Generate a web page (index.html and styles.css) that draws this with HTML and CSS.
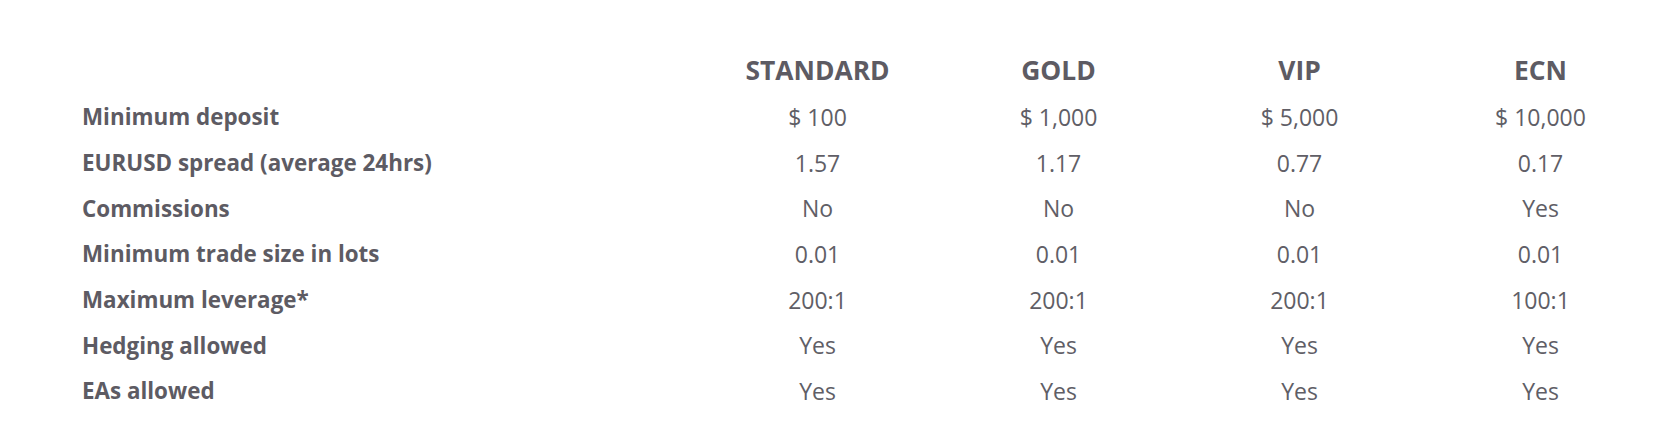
FILE: index.html
```html
<!DOCTYPE html>
<html>
<head>
<meta charset="utf-8">
<link rel="stylesheet" href="styles.css">
</head>
<body>
<div class="page">
  <div class="grid">
    <div class="row head">
      <div class="label"></div>
      <div class="cell">STANDARD</div>
      <div class="cell">GOLD</div>
      <div class="cell">VIP</div>
      <div class="cell">ECN</div>
    </div>
    <div class="row">
      <div class="label">Minimum deposit</div>
      <div class="cell">$ 100</div>
      <div class="cell">$ 1,000</div>
      <div class="cell">$ 5,000</div>
      <div class="cell">$ 10,000</div>
    </div>
    <div class="row">
      <div class="label">EURUSD spread (average 24hrs)</div>
      <div class="cell">1.57</div>
      <div class="cell">1.17</div>
      <div class="cell">0.77</div>
      <div class="cell">0.17</div>
    </div>
    <div class="row">
      <div class="label">Commissions</div>
      <div class="cell">No</div>
      <div class="cell">No</div>
      <div class="cell">No</div>
      <div class="cell">Yes</div>
    </div>
    <div class="row">
      <div class="label">Minimum trade size in lots</div>
      <div class="cell">0.01</div>
      <div class="cell">0.01</div>
      <div class="cell">0.01</div>
      <div class="cell">0.01</div>
    </div>
    <div class="row">
      <div class="label">Maximum leverage*</div>
      <div class="cell">200:1</div>
      <div class="cell">200:1</div>
      <div class="cell">200:1</div>
      <div class="cell">100:1</div>
    </div>
    <div class="row">
      <div class="label">Hedging allowed</div>
      <div class="cell">Yes</div>
      <div class="cell">Yes</div>
      <div class="cell">Yes</div>
      <div class="cell">Yes</div>
    </div>
    <div class="row">
      <div class="label">EAs allowed</div>
      <div class="cell">Yes</div>
      <div class="cell">Yes</div>
      <div class="cell">Yes</div>
      <div class="cell">Yes</div>
    </div>
  </div>
</div>
</body>
</html>
```
FILE: styles.css
```css
html, body {
  margin: 0;
  padding: 0;
  background: #ffffff;
}
.page {
  padding: 45px 0 0 82px;
  font-family: "Open Sans", "Liberation Sans", sans-serif;
  color: #605e66;
}
.grid {
  display: flex;
  flex-direction: column;
}
.row {
  display: grid;
  grid-template-columns: 615px repeat(4, 241px);
  height: 45.7px;
  align-items: center;
  font-size: 23px;
}
.row.head {
  height: 49px;
  font-size: 26.4px;
  font-weight: 700;
  color: #5d5b63;
}
.label {
  font-size: 22.4px;
  font-weight: 700;
  color: #5d5b63;
  white-space: nowrap;
}
.cell {
  text-align: center;
  white-space: nowrap;
}
```
